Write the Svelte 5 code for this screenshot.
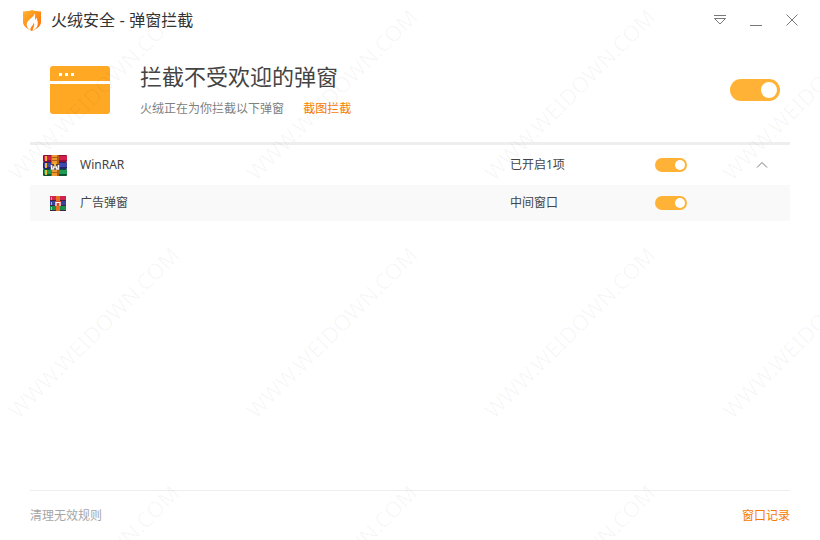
<script lang="ts">
  let enabled = $state(true);
  let expanded = $state(true);

  let group = $state({ name: 'WinRAR', active: true });
  let rules = $state([{ name: '广告弹窗', place: '中间窗口', active: true }]);

  let activeCount = $derived(rules.filter((r) => r.active).length);

  const tiles = Array.from({ length: 12 });
</script>

<div class="window">
  <header class="titlebar">
    <svg class="logo" width="18" height="21" viewBox="0 0 18 21" aria-hidden="true">
      <defs>
        <linearGradient id="shield" x1="0" y1="0" x2="1" y2="1">
          <stop offset="0" stop-color="#ffb629" />
          <stop offset="1" stop-color="#ff6a0a" />
        </linearGradient>
      </defs>
      <path d="M0 1.500C3.500 1.400 6.500 1 9 0c2.500 1 5.500 1.400 9 1.500V12c0 4-4 7-9 9-5-2-9-5-9-9z" fill="url(#shield)" />
      <path
        d="M11.500 3.300c.4 3.700-7.800 6.400-7.800 11.200 0 2.500 1.500 4.500 3.800 6-.8-3.600 3.100-4.900 3.300-8 1.200 2.200-.2 4.400-1.300 8.200 3.500-1.500 5.500-4 5.300-7.600-.1-2.300-1-3.400-1-5.300-.9.700-1.300 1.500-1.300 2.500-1.200-1.700.2-4.800-1-7z"
        fill="#fff"
      />
    </svg>
    <span class="app-name">火绒安全 - 弹窗拦截</span>
    <div class="window-buttons">
      <button type="button" aria-label="菜单">
        <svg width="12" height="12" viewBox="0 0 12 12">
          <path d="M0 1.500h12M0.500 4.500h11L6 10z" />
        </svg>
      </button>
      <button type="button" aria-label="最小化">
        <svg width="12" height="12" viewBox="0 0 12 12">
          <path d="M0 11.500h12" />
        </svg>
      </button>
      <button type="button" aria-label="关闭">
        <svg width="12" height="12" viewBox="0 0 12 12">
          <path d="M0.500 0.500l11 11M11.500 0.500l-11 11" />
        </svg>
      </button>
    </div>
  </header>

  <section class="intro">
    <svg width="60" height="48" viewBox="0 0 60 48" aria-hidden="true">
      <path d="M3 0h54a3 3 0 0 1 3 3v12H0V3a3 3 0 0 1 3-3z" fill="#ffa824" />
      <path d="M0 18h60v27a3 3 0 0 1-3 3H3a3 3 0 0 1-3-3z" fill="#ffa824" />
      <path d="M9 7h3v3H9zM15 7h3v3h-3zM21 7h3v3h-3z" fill="#fff" />
    </svg>
    <div class="intro-text">
      <h1>拦截不受欢迎的弹窗</h1>
      <p>火绒正在为你拦截以下弹窗 <a href="#capture">截图拦截</a></p>
    </div>
    <input class="switch large" type="checkbox" aria-label="弹窗拦截" bind:checked={enabled} />
  </section>

  <main>
    <table>
      <colgroup>
        <col />
        <col class="col-status" />
        <col class="col-switch" />
        <col class="col-arrow" />
      </colgroup>
      <tbody>
        <tr class="group">
          <td>
            <div class="name">
              <span class="icon">
                <svg width="24" height="21" viewBox="0 0 24 21" aria-hidden="true">
                  <rect width="24" height="7" rx="1" fill="#8d1038" />
                  <rect x="1" y="1" width="23" height="4" fill="#d2204c" />
                  <rect y="7" width="24" height="7" rx="1" fill="#24256b" />
                  <rect x="1" y="8" width="23" height="4" fill="#4048ac" />
                  <rect y="14" width="24" height="7" rx="1" fill="#0b5430" />
                  <rect x="1" y="15" width="23" height="4" fill="#1f9a50" />
                  <path d="M3 1v5M3 8v5M3 15v5" stroke="#f8b62c" stroke-width="2" />
                  <rect x="8" width="8" height="21" fill="#b45f16" />
                  <rect x="9" width="5" height="21" fill="#ee9a2e" />
                  <path d="M9 2.500h6M9 5.500h6M9 17.500h6" stroke="#a9601c" />
                  <path d="M8 9h8v6H8z" fill="#5a4a44" />
                  <path d="M8.500 10v4h2v-2h3v2h2v-4" fill="none" stroke="#f3efe9" stroke-width="1.500" />
                  <path d="M12 8v3" stroke="#f5b04a" stroke-width="2" />
                </svg>
              </span>
              {group.name}
            </div>
          </td>
          <td>已开启{activeCount}项</td>
          <td>
            <input class="switch" type="checkbox" aria-label={group.name} bind:checked={group.active} />
          </td>
          <td>
            <button
              class="arrow"
              class:closed={!expanded}
              type="button"
              aria-label="展开"
              aria-expanded={expanded}
              onclick={() => (expanded = !expanded)}
            >
              <svg width="12" height="8" viewBox="0 0 12 8">
                <path d="M1 6.500l5-5 5 5" />
              </svg>
            </button>
          </td>
        </tr>
        {#if expanded}
          {#each rules as rule}
            <tr class="rule">
              <td>
                <div class="name">
                  <span class="icon small">
                    <svg width="16" height="15" viewBox="0 0 16 15" aria-hidden="true">
                      <rect width="16" height="5" fill="#cf2450" />
                      <rect y="5" width="16" height="5" fill="#3c429c" />
                      <rect y="10" width="16" height="5" fill="#1b8f49" />
                      <path d="M0 4.500h16M0 9.500h16M0 14.500h16" stroke="#3d2444" />
                      <path d="M1.500 1v3M1.500 6v3M1.500 11v3" stroke="#f4b02e" />
                      <rect x="6" width="4" height="15" fill="#e5731f" />
                      <path d="M5 5h6v5H5z" fill="#d8482c" />
                      <path d="M6 10V6.500h4V10" fill="none" stroke="#fff" stroke-width="1.200" />
                    </svg>
                  </span>
                  {rule.name}
                </div>
              </td>
              <td>{rule.place}</td>
              <td>
                <input class="switch" type="checkbox" aria-label={rule.name} bind:checked={rule.active} />
              </td>
              <td></td>
            </tr>
          {/each}
        {/if}
      </tbody>
    </table>
  </main>

  <footer>
    <button type="button" class="clean">清理无效规则</button>
    <a href="#log">窗口记录</a>
  </footer>

  <div class="watermark" aria-hidden="true">
    {#each tiles as _}
      <span>WWW.WEIDOWN.COM</span>
    {/each}
  </div>
</div>

<style>
  :global(body) {
    margin: 0;
    background: #fff;
  }

  .window {
    position: relative;
    display: flex;
    flex-direction: column;
    min-height: 100vh;
    overflow: hidden;
    box-sizing: border-box;
    font-family: 'Noto Sans', 'Noto Sans CJK SC', sans-serif;
    font-size: 12px;
    line-height: 18px;
    color: #444;
  }

  button {
    padding: 0;
    border: 0;
    background: none;
    font: inherit;
    color: inherit;
    cursor: pointer;
  }

  a {
    color: #f57c00;
    text-decoration: none;
  }

  .titlebar {
    display: flex;
    align-items: center;
    height: 40px;
    padding: 0 16px 0 23px;
  }

  .app-name {
    padding-top: 2px;
    margin-left: 10px;
    font-family: 'Liberation Sans', 'Noto Sans CJK SC', sans-serif;
    font-size: 16px;
    line-height: 24px;
    color: #333;
  }

  .window-buttons {
    display: flex;
    gap: 12px;
    margin-left: auto;
  }

  .window-buttons button {
    display: flex;
    align-items: center;
    justify-content: center;
    width: 24px;
    height: 24px;
  }

  .window-buttons path,
  .arrow path {
    fill: none;
    stroke: #777;
  }

  .intro {
    display: flex;
    align-items: center;
    height: 100px;
    padding: 0 40px 2px 50px;
  }

  .intro-text {
    flex: 1;
    margin-left: 30px;
  }

  h1 {
    margin: 0 0 10px;
    font-size: 22px;
    font-weight: 400;
    line-height: 28px;
    color: #444;
  }

  p {
    margin: 0;
    color: #808080;
  }

  p a {
    margin-left: 16px;
  }

  .switch {
    appearance: none;
    display: flex;
    align-items: center;
    box-sizing: border-box;
    width: 32px;
    height: 14px;
    margin: 0;
    padding: 0 2px;
    border-radius: 11px;
    background: #ccc;
    cursor: pointer;
  }

  .switch::before {
    content: '';
    width: 10px;
    height: 10px;
    border-radius: 50%;
    background: #fff;
  }

  .switch:checked {
    justify-content: flex-end;
    background: #ffb236;
  }

  .switch.large {
    width: 50px;
    height: 22px;
    padding: 0 3px;
  }

  .switch.large::before {
    width: 16px;
    height: 16px;
  }

  main {
    flex: 1;
    margin: 0 30px;
    border-top: 3px solid #eee;
  }

  table {
    width: 100%;
    table-layout: fixed;
    border-collapse: collapse;
  }

  .col-status {
    width: 145px;
  }

  .col-switch {
    width: 97px;
  }

  .col-arrow {
    width: 38px;
  }

  td {
    padding: 0;
    vertical-align: middle;
  }

  .group {
    height: 40px;
  }

  .rule {
    height: 36px;
    background: #f9f9f9;
  }

  .name {
    display: flex;
    align-items: center;
  }

  .icon {
    display: flex;
    justify-content: center;
    width: 50px;
  }

  .icon.small {
    box-sizing: border-box;
    padding-left: 6px;
  }

  .arrow {
    display: flex;
    align-items: center;
    justify-content: center;
    width: 20px;
    height: 20px;
  }

  .arrow.closed svg {
    transform: rotate(180deg);
  }

  footer {
    display: flex;
    align-items: center;
    justify-content: space-between;
    height: 49px;
    margin: 0 30px;
    border-top: 1px solid #eee;
  }

  .clean {
    color: #a6a6a6;
  }

  .watermark {
    position: absolute;
    inset: -25px 0 0 -26px;
    display: grid;
    grid-template-columns: repeat(4, 238px);
    grid-auto-rows: 238px;
    place-items: center;
    overflow: hidden;
    pointer-events: none;
    font-size: 22px;
    line-height: 16px;
    color: rgba(0, 0, 0, 0.035);
  }

  .watermark span {
    transform: rotate(-45deg);
  }
</style>
